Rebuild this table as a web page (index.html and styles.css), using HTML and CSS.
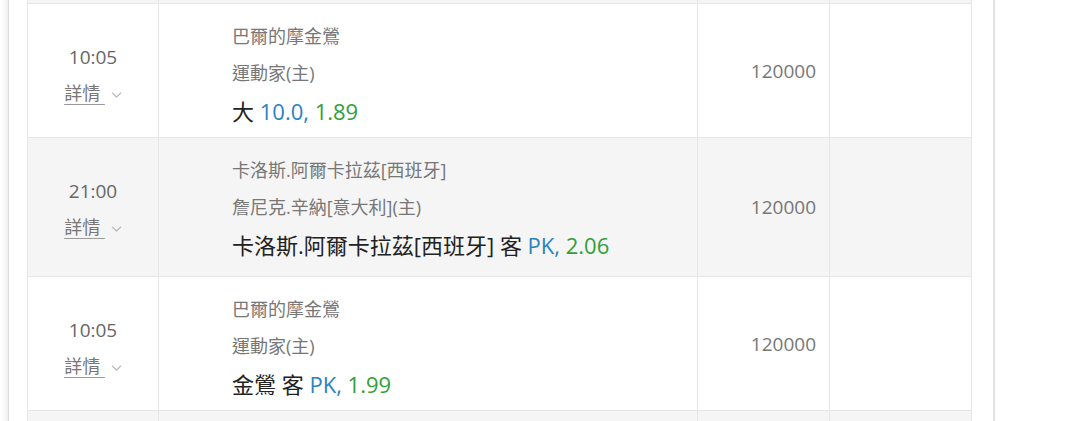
FILE: index.html
```html
<!DOCTYPE html>
<html lang="zh-Hant">
<head>
  <meta charset="UTF-8">
  <title>投注紀錄</title>
  <link rel="stylesheet" href="styles.css">
</head>
<body>
  <div class="panel">
    <table class="bets">
      <colgroup>
        <col class="c-time">
        <col class="c-match">
        <col class="c-amount">
        <col class="c-result">
      </colgroup>
      <tbody>
        <tr>
          <td class="time">
            <div class="clock">19:30</div>
            <div class="detail"><a class="more" href="#">詳情&nbsp;</a><svg class="chev" viewBox="0 0 11 6"><polyline points="1,0.8 5.5,5 10,0.8"/></svg></div>
          </td>
          <td class="match">
            <div class="team">紐約洋基</div>
            <div class="team">波士頓紅襪(主)</div>
            <div class="pick">洋基 客 <span class="line">PK,</span> <span class="odds">1.95</span></div>
          </td>
          <td class="amount">120000</td>
          <td class="result"></td>
        </tr>
        <tr>
          <td class="time">
            <div class="clock">10:05</div>
            <div class="detail"><a class="more" href="#">詳情&nbsp;</a><svg class="chev" viewBox="0 0 11 6"><polyline points="1,0.8 5.5,5 10,0.8"/></svg></div>
          </td>
          <td class="match">
            <div class="team">巴爾的摩金鶯</div>
            <div class="team">運動家(主)</div>
            <div class="pick">大 <span class="line">10.0,</span> <span class="odds">1.89</span></div>
          </td>
          <td class="amount">120000</td>
          <td class="result"></td>
        </tr>
        <tr class="tall">
          <td class="time">
            <div class="clock">21:00</div>
            <div class="detail"><a class="more" href="#">詳情&nbsp;</a><svg class="chev" viewBox="0 0 11 6"><polyline points="1,0.8 5.5,5 10,0.8"/></svg></div>
          </td>
          <td class="match">
            <div class="team">卡洛斯.阿爾卡拉茲[西班牙]</div>
            <div class="team">詹尼克.辛納[意大利](主)</div>
            <div class="pick">卡洛斯.阿爾卡拉茲[西班牙] 客 <span class="line">PK,</span> <span class="odds">2.06</span></div>
          </td>
          <td class="amount">120000</td>
          <td class="result"></td>
        </tr>
        <tr>
          <td class="time">
            <div class="clock">10:05</div>
            <div class="detail"><a class="more" href="#">詳情&nbsp;</a><svg class="chev" viewBox="0 0 11 6"><polyline points="1,0.8 5.5,5 10,0.8"/></svg></div>
          </td>
          <td class="match">
            <div class="team">巴爾的摩金鶯</div>
            <div class="team">運動家(主)</div>
            <div class="pick">金鶯 客 <span class="line">PK,</span> <span class="odds">1.99</span></div>
          </td>
          <td class="amount">120000</td>
          <td class="result"></td>
        </tr>
        <tr>
          <td class="time">
            <div class="clock">22:15</div>
            <div class="detail"><a class="more" href="#">詳情&nbsp;</a><svg class="chev" viewBox="0 0 11 6"><polyline points="1,0.8 5.5,5 10,0.8"/></svg></div>
          </td>
          <td class="match">
            <div class="team">洛杉磯道奇</div>
            <div class="team">舊金山巨人(主)</div>
            <div class="pick">小 <span class="line">8.5,</span> <span class="odds">1.91</span></div>
          </td>
          <td class="amount">120000</td>
          <td class="result"></td>
        </tr>
      </tbody>
    </table>
  </div>
</body>
</html>
```

FILE: styles.css
```css
body {
  margin: 0;
  background: #fff;
  font-family: "Open Sans", "Noto Sans CJK TC", sans-serif;
  overflow: hidden;
}
.panel {
  margin: -131px 0 0 8px;
  width: 944px;
  padding: 0 22px 0 18px;
  border-left: 1px solid #dcdcdc;
  border-right: 2px solid #e2e2e2;
  box-shadow: -3px 0 5px rgba(0, 0, 0, 0.07);
}
.bets {
  width: 944px;
  border-collapse: collapse;
  table-layout: fixed;
}
.c-time { width: 131px; }
.c-match { width: 539px; }
.c-amount { width: 132px; }
.c-result { width: 142px; }
.bets td {
  border: 1px solid #e6e6e6;
  height: 133px;
  padding: 0;
  overflow: hidden;
}
.bets tr.tall td {
  height: 138px;
}
.bets tr:nth-child(odd) td {
  background: #f5f5f5;
}
.time {
  text-align: center;
  vertical-align: top;
}
.clock {
  margin-top: 35px;
  height: 36px;
  font-size: 19px;
  line-height: 36px;
  color: #666;
}
.detail {
  height: 36px;
  line-height: 36px;
}
.more {
  font-size: 18px;
  color: #777;
  text-decoration: underline;
  text-underline-offset: 4px;
  text-decoration-color: #999;
}
.chev {
  width: 11px;
  height: 6px;
  margin-left: 6px;
  vertical-align: 2px;
}
.chev polyline {
  fill: none;
  stroke: #bdbdbd;
  stroke-width: 1.3;
}
.match {
  vertical-align: top;
  padding-left: 73px !important;
}
.team {
  height: 37px;
  font-size: 18px;
  line-height: 37px;
  color: #777;
}
.team:first-child {
  margin-top: 14px;
}
.pick {
  height: 38px;
  font-size: 22px;
  line-height: 38px;
  color: #222;
}
.line {
  color: #2a82bf;
}
.odds {
  color: #31a035;
}
.amount {
  text-align: right;
  vertical-align: middle;
  padding-right: 13px !important;
  font-size: 19px;
  color: #777;
}
```
